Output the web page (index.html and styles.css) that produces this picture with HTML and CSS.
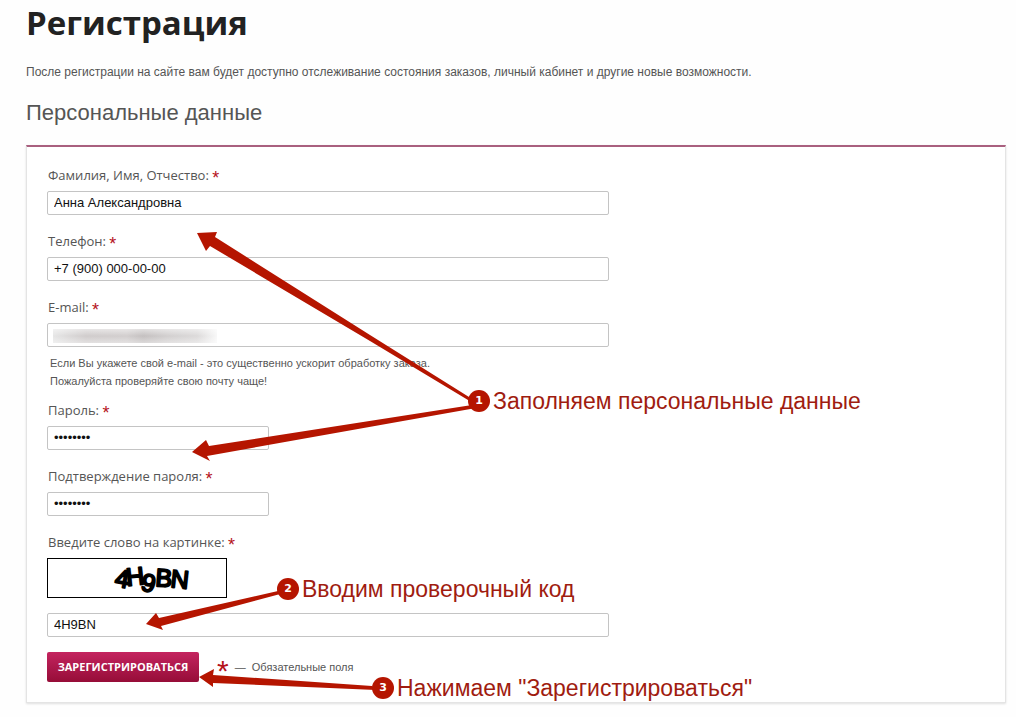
FILE: index.html
```html
<!DOCTYPE html>
<html lang="ru">
  <head>
    <meta charset="UTF-8" />
    <meta name="viewport" content="width=device-width, initial-scale=1.0" />
    <title>Регистрация</title>
    <link rel="stylesheet" href="styles.css">
  </head>
  <body>
    <div class="page">
      <h1>Регистрация</h1>
      <p class="intro">После регистрации на сайте вам будет доступно отслеживание состояния заказов, личный кабинет и другие новые возможности.</p>
      <h2>Персональные данные</h2>

      <form class="panel">
        <div class="field">
          <label for="name">Фамилия, Имя, Отчество: <span class="star">*</span></label>
          <input type="text" id="name" value="Анна Александровна" />
        </div>
        <div class="field">
          <label for="phone">Телефон: <span class="star">*</span></label>
          <input type="text" id="phone" value="+7 (900) 000-00-00" />
        </div>
        <div class="field field-email">
          <label for="email">E-mail: <span class="star">*</span></label>
          <div class="masked">
            <input type="text" id="email" />
            <span class="mask"></span>
          </div>
          <p class="hint">Если Вы укажете свой e-mail - это существенно ускорит обработку заказа.<br />Пожалуйста проверяйте свою почту чаще!</p>
        </div>
        <div class="field">
          <label for="password">Пароль: <span class="star">*</span></label>
          <input type="password" id="password" class="short" value="password" />
        </div>
        <div class="field">
          <label for="confirm">Подтверждение пароля: <span class="star">*</span></label>
          <input type="password" id="confirm" class="short" value="password" />
        </div>
        <div class="field field-captcha">
          <label for="captcha">Введите слово на картинке: <span class="star">*</span></label>
          <svg class="captcha" viewBox="0 0 178 38">
            <text x="66 79 92 107 122" y="27 27 31 27 28" rotate="10 -6 12 4 6">4H9BN</text>
          </svg>
          <input type="text" id="captcha" value="4H9BN" />
        </div>
        <div class="actions">
          <button type="button">Зарегистрироваться</button>
          <span class="star star-big">*</span>
          <span class="required">— &nbsp;Обязательные поля</span>
        </div>
      </form>

      <!-- Стрелки и подсказки поверх формы -->
      <svg class="arrows">
        <polygon points="197,233 217,232 215,237 370,335 469,397 475,404 468,400 370,341 210,246 206,251" />
        <polygon points="192,452 206,440 209,446 472,405 476,408 207,456 210,461" />
        <polygon points="146,624 156,613 159,618 278,591 284,593 161,626 163,630" />
        <polygon points="199,677 214,669 213,675 372,686 376,690 213,683 213,687" />
      </svg>
      <div class="note note-1"><span class="num">1</span>Заполняем персональные данные</div>
      <div class="note note-2"><span class="num">2</span>Вводим проверочный код</div>
      <div class="note note-3"><span class="num">3</span>Нажимаем "Зарегистрироваться"</div>
    </div>
  </body>
</html>
```
FILE: styles.css
```css
* {
  box-sizing: border-box;
}

body {
  margin: 0;
  background-color: #fefefe;
  color: #555;
  font-family: "Liberation Sans", Arial, sans-serif;
  font-size: 12px;
}

.page {
  position: relative;
  padding: 0 10px 12px 26px;
}

h1 {
  margin: 0;
  font-family: "Open Sans", "Noto Sans", sans-serif;
  font-size: 33px;
  line-height: 46px;
  font-weight: 700;
  color: #222;
}

.intro {
  margin: 16px 0 18px;
  line-height: 20px;
}

h2 {
  margin: 0 0 19px;
  font-size: 22px;
  line-height: 26px;
  font-weight: 400;
}

.panel {
  padding: 18px 20px 20px;
  background-color: #fff;
  border: 1px solid #e4e4e4;
  border-top: 2px solid #a9607f;
  box-shadow: 0 1px 2px rgba(0, 0, 0, 0.12);
}

.field {
  display: flex;
  flex-direction: column;
  align-items: flex-start;
  margin-bottom: 16px;
}

.field label {
  margin: 0 0 6px 1px;
  font-family: "Open Sans", "Noto Sans", sans-serif;
  font-size: 13px;
  line-height: 20px;
}

.star {
  color: #b5121b;
  font-family: "Liberation Sans", Arial, sans-serif;
  font-size: 18px;
  line-height: 0;
  vertical-align: -4px;
}

.field input {
  width: 562px;
  max-width: 100%;
  height: 24px;
  padding: 0 6px 1px;
  border: 1px solid #c4c4c4;
  border-radius: 2px;
  background-color: #fff;
  color: #111;
  font-family: "Liberation Sans", Arial, sans-serif;
  font-size: 13px;
}

.field .short {
  width: 222px;
}

.field-email {
  margin-bottom: 10px;
}

.masked {
  position: relative;
  display: flex;
  width: 100%;
}

/* Размытый адрес почты */
.mask {
  position: absolute;
  top: 6px;
  left: 6px;
  width: 164px;
  height: 14px;
  background:
    linear-gradient(rgba(255, 255, 255, 0.5), transparent 50%, rgba(255, 255, 255, 0.4)),
    linear-gradient(90deg, #e6e6e6, #d0cccc 20%, #d2cece 45%, #c4c0c0 55%, #d2cfcf 70%, #dcdada 88%, #f8f8f8);
}

.hint {
  margin: 7px 0 0 3px;
  font-size: 11px;
  line-height: 18px;
}

.field-captcha {
  margin-bottom: 15px;
}

.captcha {
  width: 180px;
  height: 40px;
  margin-bottom: 15px;
  border: 1px solid #000;
  background-color: #fff;
}

.captcha text {
  font-family: "Liberation Sans", Arial, sans-serif;
  font-size: 25px;
  fill: #000;
  stroke: #000;
  stroke-width: 2px;
  stroke-linejoin: round;
}

.actions {
  display: flex;
  align-items: center;
}

.actions button {
  height: 30px;
  width: 152px;
  padding: 0 0 2px;
  border: none;
  border-radius: 2px;
  background: linear-gradient(#c4245f, #960d38);
  color: #fff;
  font-family: "Open Sans", "Noto Sans", sans-serif;
  font-size: 11px;
  font-weight: 700;
  text-transform: uppercase;
  cursor: pointer;
}

.star-big {
  height: 30px;
  margin: 0 6px 0 18px;
  font-size: 30px;
  line-height: 38px;
}

.required {
  font-size: 11px;
}

.arrows {
  position: absolute;
  top: 0;
  left: 0;
  width: 100%;
  height: 100%;
  fill: #b51500;
  pointer-events: none;
}

.note {
  position: absolute;
  display: flex;
  align-items: center;
  gap: 3px;
  color: #a01c10;
  font-size: 23px;
  line-height: 26px;
  white-space: nowrap;
  pointer-events: none;
}

.num {
  width: 22px;
  height: 22px;
  border-radius: 50%;
  background-color: #b51500;
  color: #fff;
  font-family: "DejaVu Sans", sans-serif;
  font-size: 11px;
  font-weight: 700;
  line-height: 22px;
  text-align: center;
}

.note-1 {
  top: 388px;
  left: 468px;
}

.note-2 {
  top: 576px;
  left: 277px;
}

.note-3 {
  top: 675px;
  left: 372px;
}
```
